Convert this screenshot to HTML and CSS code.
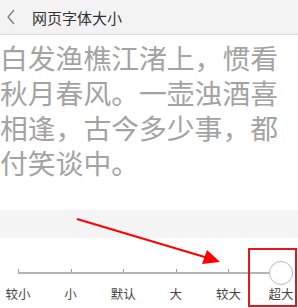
FILE: index.html
```html
<!DOCTYPE html>
<html lang="zh-CN">
<head>
<meta charset="utf-8">
<link rel="stylesheet" href="styles.css">
</head>
<body>
<div class="page">
  <header class="topbar">
    <svg class="back" width="10" height="16" viewBox="0 0 10 16"><path d="M8 1 L2 8 L8 15" fill="none" stroke="#777" stroke-width="1.2"/></svg>
    <span class="title">网页字体大小</span>
  </header>
  <p class="sample">白发渔樵江渚上，惯看秋月春风。一壶浊酒喜相逢，古今多少事，都付笑谈中。</p>
  <div class="band"></div>
  <section class="slider">
    <div class="track">
      <span class="stop"><i class="tick"></i></span>
      <span class="stop"><i class="tick"></i></span>
      <span class="stop"><i class="tick"></i></span>
      <span class="stop"><i class="tick"></i></span>
      <span class="stop"><i class="tick"></i></span>
      <span class="stop"><i class="knob"></i></span>
    </div>
    <div class="labels">
      <span class="label">较小</span>
      <span class="label">小</span>
      <span class="label">默认</span>
      <span class="label">大</span>
      <span class="label">较大</span>
      <span class="label">超大</span>
    </div>
  </section>
  <svg class="arrow" width="298" height="308" viewBox="0 0 298 308">
    <line x1="77" y1="219" x2="208" y2="258" stroke="#f00" stroke-width="2"/>
    <polygon points="220,262 202,264 207,250" fill="#f00"/>
  </svg>
  <div class="highlight"></div>
</div>
</body>
</html>
```

FILE: styles.css
```css
* { box-sizing: border-box; margin: 0; padding: 0; }
html, body { background: #fff; }
body {
  margin: 0;
  font-family: "Noto Sans CJK SC", "Noto Sans", sans-serif;
}
.page {
  position: relative;
  width: 298px;
  height: 308px;
  overflow: hidden;
}
.topbar {
  height: 35px;
  background: #f3f3f3;
  border-bottom: 1px solid #dcdcdc;
  display: flex;
  align-items: center;
  padding-left: 6px;
  gap: 16px;
}
.back { display: block; }
.title {
  font-size: 15px;
  color: #333;
  line-height: 1;
}
.sample {
  padding-top: 5px;
  font-size: 27.8px;
  line-height: 35px;
  color: #a3a3a3;
  height: 175px;
  letter-spacing: 0;
}
.band {
  height: 28px;
  background: #f4f4f4;
}
.slider {
  height: 70px;
  padding-top: 34px;
}
.track {
  height: 2px;
  background: #b5b5b5;
  margin: 0 17px 0 18px;
  display: flex;
  justify-content: space-between;
}
.stop {
  position: relative;
  width: 0;
  height: 2px;
}
.tick {
  position: absolute;
  left: 0;
  top: -3px;
  width: 1px;
  height: 3px;
  background: #9a9a9a;
}
.knob {
  position: absolute;
  left: -12px;
  top: -11px;
  width: 24px;
  height: 24px;
  border-radius: 50%;
  background: #fff;
  border: 1.5px solid #b8b8b8;
}
.labels {
  margin: 11px 17px 0 18px;
  display: flex;
  justify-content: space-between;
}
.label {
  width: 0;
  display: flex;
  justify-content: center;
  white-space: nowrap;
  font-size: 12.5px;
  line-height: 18px;
  color: #444;
}
.arrow {
  position: absolute;
  left: 0;
  top: 0;
  pointer-events: none;
}
.highlight {
  position: absolute;
  left: 248px;
  top: 248px;
  width: 49px;
  height: 59px;
  border: 2px solid #e8141b;
}
```
